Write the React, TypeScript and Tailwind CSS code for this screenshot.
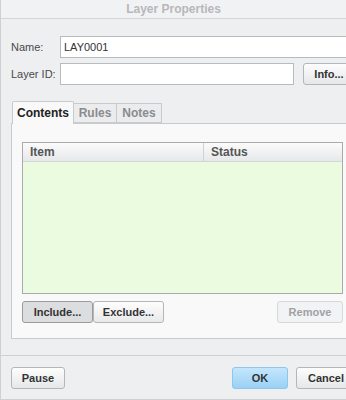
import React from "react";

const btn =
  "h-[22px] shrink-0 rounded-[3px] border text-[11px] font-bold flex items-center justify-center";

export default function App() {
  return (
    <div className="w-[346px] h-[400px] overflow-hidden bg-[#eeeff1] border-l border-b border-[#cfd0d2] font-['Liberation_Sans',Arial,sans-serif] text-[11px] flex flex-col">
      <div className="h-[19px] shrink-0 border-b border-[#d4d5d7] bg-[#f1f2f3] flex items-center justify-center font-bold text-[12px] text-[#b7b8ba]">
        Layer Properties
      </div>
      <div className="pl-[10px] pt-[17px] flex flex-col">
        <div className="flex items-center h-[22px]">
          <div className="w-[49px] shrink-0 text-[#4a4a4a]">Name:</div>
          <div className="w-[300px] shrink-0 h-[22px] border border-[#b9babc] bg-white flex items-center pl-[3px] text-[#333]">
            LAY0001
          </div>
        </div>
        <div className="flex items-center h-[22px] mt-[5px]">
          <div className="w-[49px] shrink-0 text-[#4a4a4a]">Layer ID:</div>
          <div className="w-[234px] shrink-0 h-[22px] border border-[#b9babc] bg-white" />
          <div className={`${btn} ml-[9px] w-[52px] border-[#b5b6b8] bg-gradient-to-b from-[#fdfdfd] to-[#e6e7e9] text-[#333]`}>
            Info...
          </div>
        </div>
        <div className="mt-[16px] ml-[1px] flex items-end h-[22px]">
          <div className="relative z-10 w-[62px] h-[23px] mb-[-1px] border border-b-0 border-[#c9cacc] bg-[#f9f9f9] rounded-t-[2px] flex items-center justify-center font-bold text-[12px] text-[#222]">
            Contents
          </div>
          <div className="w-[43px] h-[20px] border border-l-0 border-[#c9cacc] bg-[#ebecee] flex items-center justify-center font-bold text-[12px] text-[#8a8b8d]">
            Rules
          </div>
          <div className="w-[45px] h-[20px] border border-l-0 border-[#c9cacc] bg-[#ebecee] flex items-center justify-center font-bold text-[12px] text-[#8a8b8d]">
            Notes
          </div>
        </div>
        <div className="w-[345px] shrink-0 h-[216px] border border-[#c9cacc] bg-[#f9f9f9] pl-[10px] pt-[18px] flex flex-col">
          <div className="w-[321px] h-[152px] border border-[#a9aaac] flex flex-col">
            <div className="h-[19px] shrink-0 flex border-b border-[#d4d5d7] bg-gradient-to-b from-[#fbfbfb] to-[#e7e8ea] font-bold text-[12px] text-[#555]">
              <div className="w-[181px] border-r border-[#d0d1d3] pl-[7px] flex items-center">Item</div>
              <div className="flex-1 pl-[7px] flex items-center">Status</div>
            </div>
            <div className="flex-1 bg-[#eafbdf]" />
          </div>
          <div className="mt-[7px] w-[321px] flex">
            <div className={`${btn} w-[71px] border-[#9a9b9d] bg-[#dcdddf] text-[#333]`}>
              Include...
            </div>
            <div className={`${btn} w-[71px] border-[#b5b6b8] bg-gradient-to-b from-[#fdfdfd] to-[#e8e9eb] text-[#333]`}>
              Exclude...
            </div>
            <div className="flex-1" />
            <div className={`${btn} w-[66px] border-[#d6d7d9] bg-[#f2f3f4] text-[#a0a1a3]`}>
              Remove
            </div>
          </div>
        </div>
      </div>
      <div className="mt-[16px] border-t border-[#cfd0d2] pt-[11px] pl-[10px] flex">
        <div className={`${btn} w-[54px] border-[#b5b6b8] bg-gradient-to-b from-[#fdfdfd] to-[#e6e7e9] text-[#333]`}>
          Pause
        </div>
        <div className="flex-1" />
        <div className={`${btn} w-[56px] border-[#8ec6ec] bg-gradient-to-b from-[#c4e6fc] to-[#99d1f5] text-[#333]`}>
          OK
        </div>
        <div className={`${btn} ml-[8px] w-[60px] mr-[-10px] border-[#b5b6b8] bg-gradient-to-b from-[#fdfdfd] to-[#e6e7e9] text-[#333]`}>
          Cancel
        </div>
      </div>
    </div>
  );
}
